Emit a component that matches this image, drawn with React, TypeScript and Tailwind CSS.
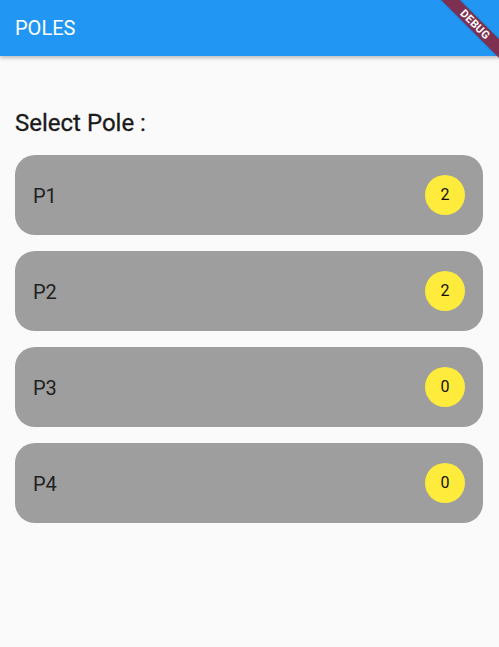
import React from "react";

const poles = [
  { name: "P1", count: 2 },
  { name: "P2", count: 2 },
  { name: "P3", count: 0 },
  { name: "P4", count: 0 },
];

export default function App() {
  return (
    <div className="relative w-[499px] h-[647px] overflow-hidden bg-[#fafafa] font-[Roboto,'Noto_Sans',sans-serif]">
      <header className="relative z-10 h-[56px] bg-[#2196f3] flex items-center px-[15px] shadow-[0_2px_4px_rgba(0,0,0,0.25)]">
        <h1 className="text-white text-[20px] font-normal leading-none">POLES</h1>
      </header>

      <main className="px-[15px] pt-[53px]">
        <h2 className="text-[24px] font-normal text-[#1a1a1a] leading-[28px] [-webkit-text-stroke:0.3px_#1a1a1a]">
          Select Pole :
        </h2>
        <div className="mt-[18px] flex flex-col gap-[16px] pr-[1px]">
          {poles.map((p) => (
            <div
              key={p.name}
              className="h-[80px] rounded-[20px] bg-[#9e9e9e] flex items-center justify-between pl-[18px] pr-[18px]"
            >
              <span className="text-[20px] text-[#212121] leading-none pt-[1px]">{p.name}</span>
              <span className="w-[40px] h-[40px] rounded-full bg-[#ffeb3b] flex items-center justify-center text-[16px] font-normal text-[#111111] leading-none">
                {p.count}
              </span>
            </div>
          ))}
        </div>
      </main>

      <div className="absolute left-[415px] top-[18px] w-[120px] h-[13px] rotate-45 bg-[#7d3050] z-20 flex items-center justify-center shadow-[0_0_2px_rgba(0,0,0,0.3)]">
        <span className="text-white text-[11px] font-bold leading-none tracking-[0.3px]">DEBUG</span>
      </div>
    </div>
  );
}
